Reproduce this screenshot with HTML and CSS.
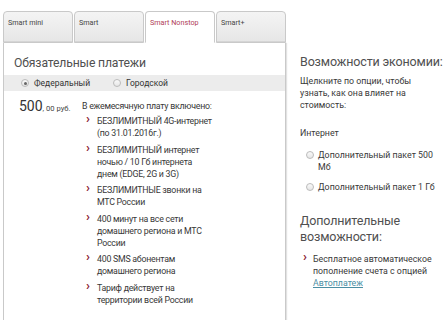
FILE: index.html
```html
<!DOCTYPE html>
<html lang="ru">
<head>
<meta charset="utf-8">
<link rel="stylesheet" href="styles.css">
</head>
<body>
<div class="page">
  <div class="left">
    <div class="tabs">
      <div class="tab">Smart mini</div>
      <div class="tab">Smart</div>
      <div class="tab active">Smart Nonstop</div>
      <div class="tab">Smart+</div>
    </div>
    <div class="panel">
      <h2 class="title">Обязательные платежи</h2>
      <div class="regions">
        <span class="opt"><span class="radio checked"></span>Федеральный</span>
        <span class="opt"><span class="radio"></span>Городской</span>
      </div>
      <div class="price-row">
        <div class="price"><span class="big">500</span>, 00 руб.</div>
        <div class="incl">
          <div class="incl-head">В ежемесячную плату включено:</div>
          <ul class="list">
            <li>БЕЗЛИМИТНЫЙ 4G-интернет<br>(по 31.01.2016г.)</li>
            <li>БЕЗЛИМИТНЫЙ интернет<br>ночью / 10 Гб интернета<br>днем (EDGE, 2G и 3G)</li>
            <li>БЕЗЛИМИТНЫЕ звонки на<br>МТС России</li>
            <li>400 минут на все сети<br>домашнего региона и МТС<br>России</li>
            <li>400 SMS абонентам<br>домашнего региона</li>
            <li>Тариф действует на<br>территории всей России</li>
          </ul>
        </div>
      </div>
    </div>
  </div>
  <div class="right">
    <h3 class="rtitle">Возможности экономии:</h3>
    <p class="hint">Щелкните по опции, чтобы<br>узнать, как она влияет на<br>стоимость:</p>
    <div class="group">Интернет</div>
    <div class="ropt first"><span class="radio"></span><span>Дополнительный пакет 500<br>Мб</span></div>
    <div class="ropt"><span class="radio"></span><span>Дополнительный пакет 1 Гб</span></div>
    <h3 class="rtitle second">Дополнительные<br>возможности:</h3>
    <ul class="list rlist">
      <li>Бесплатное автоматическое<br>пополнение счета с опцией<br><a href="#" class="link">Автоплатеж</a></li>
    </ul>
  </div>
</div>
</body>
</html>
```

FILE: styles.css
```css
* { box-sizing: border-box; }
html, body { margin: 0; padding: 0; background: #fff; }
body {
  font-family: Roboto, "Open Sans", sans-serif;
  color: #333;
  width: 447px;
  height: 320px;
  overflow: hidden;
}
.page {
  display: flex;
  align-items: flex-start;
}
.left {
  margin-left: 3px;
  margin-top: 11px;
  width: 283px;
  flex: none;
}
.tabs {
  display: flex;
  height: 32px;
}
.tab {
  flex: 1;
  border: 1px solid #c9c9c9;
  border-radius: 4px 4px 0 0;
  background: linear-gradient(#f4f4f4, #e6e6e6);
  font-size: 7.2px;
  color: #444;
  padding: 6px 0 0 4px;
  margin-right: 1px;
  box-shadow: inset 0 -1px 0 #d5d5d5;
}
.tab:last-child { margin-right: 0; }
.tab.active {
  background: #fff;
  border-bottom-color: #fff;
  color: #b04058;
  box-shadow: none;
}
.panel {
  border: 1px solid #c9c9c9;
  border-top: none;
  height: 290px;
  box-shadow: 1px 0 1px #e2e2e2;
}
.title {
  margin: 0;
  padding: 10px 0 0 10px;
  font-size: 12.2px;
  font-weight: 400;
  color: #505050;
  height: 32px;
  line-height: 20px;
  letter-spacing: -0.15px;
  white-space: nowrap;
}
.regions {
  background: #ececec;
  height: 16px;
  display: flex;
  align-items: center;
  font-size: 8.5px;
  color: #333;
  padding-left: 17px;
}
.opt {
  display: flex;
  align-items: center;
  margin-right: 23px;
}
.radio {
  display: inline-block;
  width: 8px;
  height: 8px;
  border-radius: 50%;
  border: 1px solid #bbb;
  background: linear-gradient(#fafafa, #e6e6e6);
  margin-right: 4px;
  flex: none;
  position: relative;
}
.regions .radio { margin-right: 5px; }
.radio.checked::after {
  content: "";
  position: absolute;
  left: 1.5px;
  top: 1.5px;
  width: 3px;
  height: 3px;
  border-radius: 50%;
  background: #666;
}
.price-row {
  display: flex;
  padding: 7px 0 0 15px;
}
.price {
  width: 63px;
  font-size: 7.6px;
  color: #444;
  flex: none;
  white-space: nowrap;
}
.price .big {
  font-size: 14px;
  color: #333;
}
.incl {
  font-size: 8.8px;
  color: #383838;
  line-height: 12px;
  padding-top: 2px;
  white-space: nowrap;
  letter-spacing: -0.25px;
}
.list {
  list-style: none;
  margin: 3px 0 0 0;
  padding: 0 0 0 15px;
}
.list li {
  position: relative;
  margin-bottom: 4.6px;
}
.list li::before {
  content: "›";
  position: absolute;
  left: -11px;
  top: -2px;
  font-weight: 700;
  font-size: 13px;
  color: #8a1b33;
}
.right {
  padding-left: 14px;
  padding-top: 54px;
  font-size: 8.8px;
  color: #383838;
  line-height: 12px;
  width: 161px;
  flex: none;
  white-space: nowrap;
}
.rtitle {
  margin: 0;
  font-size: 12.5px;
  font-weight: 400;
  color: #505050;
  line-height: 16px;
  letter-spacing: -0.15px;
}
.hint {
  margin: 5px 0 0 0;
}
.group {
  margin-top: 16px;
}
.ropt {
  display: flex;
  align-items: flex-start;
  padding-left: 6px;
  margin-top: 8px;
}
.ropt.first { margin-top: 10px; }
.ropt .radio { margin-top: 2px; margin-right: 4px; }
.rtitle.second { margin-top: 20px; }
.rlist { margin-top: 8px; padding-left: 13px; }
.rlist li::before { left: -10px; }
.link { color: #4b8ea3; }
```
